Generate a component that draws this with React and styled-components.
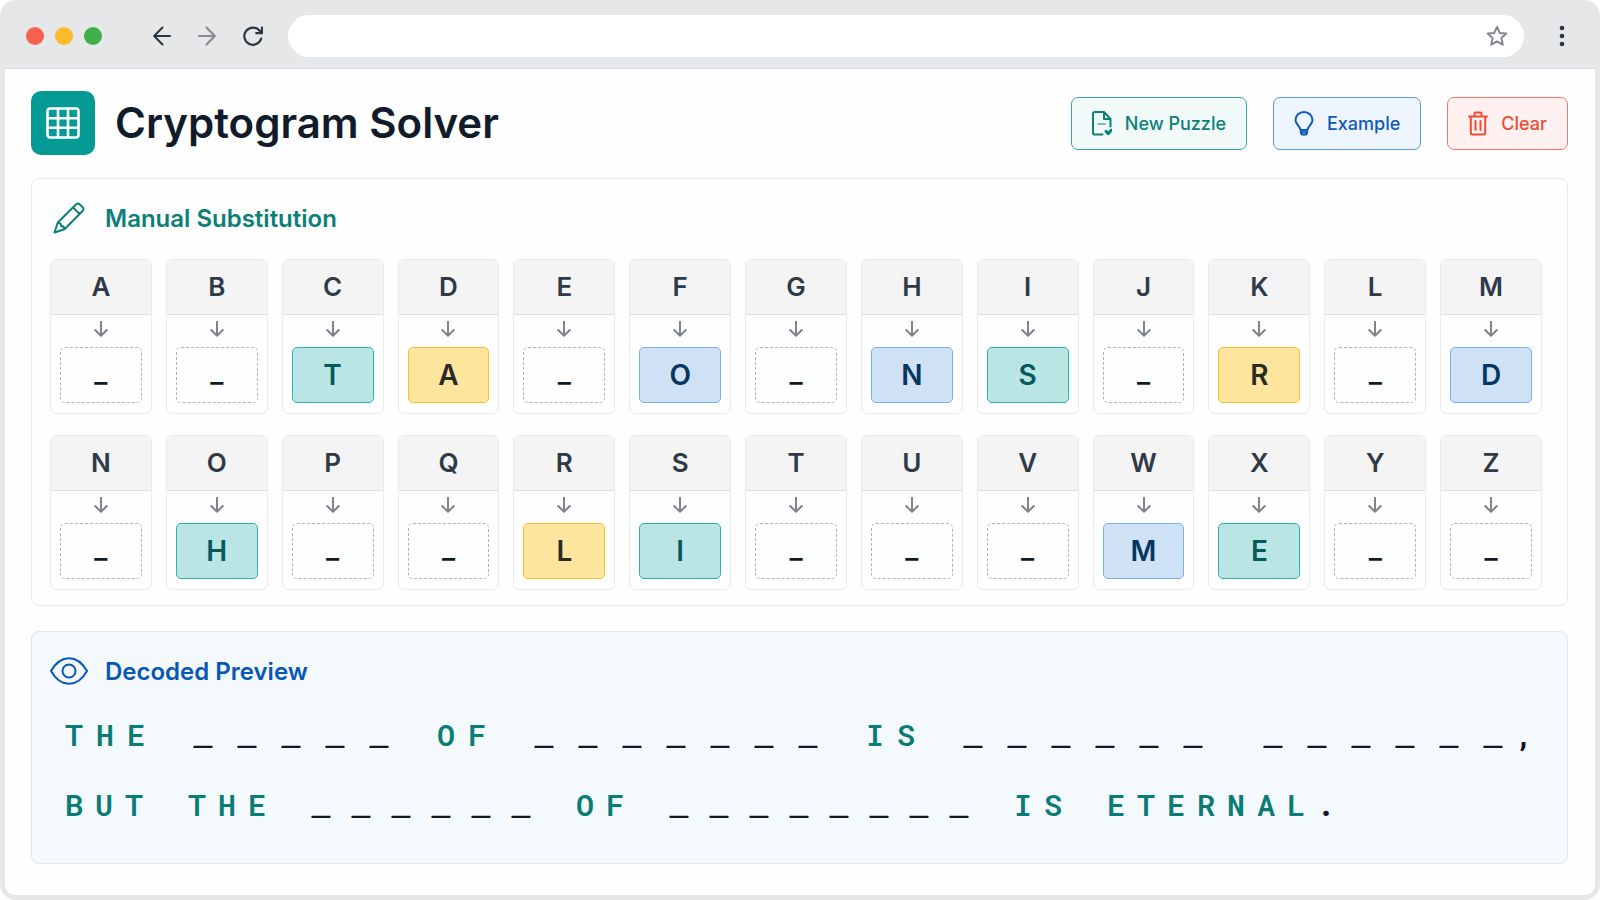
import React from 'react'
import styled, { createGlobalStyle, css } from 'styled-components'

const TOP_ROW = 'ABCDEFGHIJKLM'.split('')
const BOTTOM_ROW = 'NOPQRSTUVWXYZ'.split('')

const SUBSTITUTIONS = {
  C: { letter: 'T', tone: 'teal' },
  D: { letter: 'A', tone: 'amber' },
  F: { letter: 'O', tone: 'blue' },
  H: { letter: 'N', tone: 'blue' },
  I: { letter: 'S', tone: 'teal' },
  K: { letter: 'R', tone: 'amber' },
  M: { letter: 'D', tone: 'blue' },
  O: { letter: 'H', tone: 'teal' },
  R: { letter: 'L', tone: 'amber' },
  S: { letter: 'I', tone: 'teal' },
  W: { letter: 'M', tone: 'blue' },
  X: { letter: 'E', tone: 'teal' }
}

const PREVIEW = [
  { id: 'first', words: ['THE', '_____', 'OF', '_______', 'IS', '______', '______,'] },
  { id: 'second', dense: true, words: ['BUT', 'THE', '______', 'OF', '________', 'IS', 'ETERNAL.'] }
]

const slotTones = {
  teal: { background: '#b9e5e5', border: '#2bb3ad', color: '#065a5c' },
  amber: { background: '#fee59d', border: '#fbc02d', color: '#2a2a24' },
  blue: { background: '#cfe1f5', border: '#7ab0e8', color: '#06365f' }
}

const buttonTones = {
  teal: { background: '#f1faf9', border: '#36a7a0', color: '#0b8078' },
  blue: { background: '#eff5fe', border: '#5a97dc', color: '#0d5bb8' },
  red: { background: '#fff1f0', border: '#f7796a', color: '#f04a35' }
}

const isBlank = word => Boolean(word) && word[0] === '_'

function BrowserBar () {
  return (
    <Chrome>
      <Lights>
        <Light $color='#f9604f' />
        <Light $color='#fdbc2c' />
        <Light $color='#3fb049' />
      </Lights>
      <NavButtons>
        <NavButton aria-label='Back'>
          <svg width='18' height='20' viewBox='0 0 18 20'><path d='M17 10H1.500M9.500 1.500L1.200 10l8.300 8.500' /></svg>
        </NavButton>
        <NavButton aria-label='Forward' $muted>
          <svg width='18' height='20' viewBox='0 0 18 20'><path d='M1 10h15.500M8.500 1.500l8.300 8.500-8.300 8.500' /></svg>
        </NavButton>
        <NavButton aria-label='Reload'>
          <svg width='20' height='20' viewBox='0 0 20 20'><path d='M18.200 12.500a8.600 8.600 0 1 1-1.600-7.800L18.500 7M19 1.500V7.200H13.200' strokeWidth='2.200' /></svg>
        </NavButton>
      </NavButtons>
      <AddressBar>
        <AddressInput aria-label='Address' />
        <NavButton aria-label='Bookmark' $muted>
          <svg width='22' height='22' viewBox='0 0 22 22'><path d='M11 1.800l2.700 6.100 6.600.7-4.900 4.500 1.400 6.600-5.800-3.400-5.800 3.400 1.400-6.600L1.700 8.600l6.600-.7z' /></svg>
        </NavButton>
      </AddressBar>
      <NavButton aria-label='Menu'>
        <MenuDots width='6' height='22' viewBox='0 0 6 22'>
          <circle cx='3' cy='3' r='2.300' />
          <circle cx='3' cy='11' r='2.300' />
          <circle cx='3' cy='19' r='2.300' />
        </MenuDots>
      </NavButton>
    </Chrome>
  )
}

function AppHeader () {
  return (
    <Header>
      <LogoMark>
        <svg width='34' height='32' viewBox='0 0 34 32'>
          <rect x='1.500' y='1.500' width='31' height='29' rx='2.500' strokeWidth='2.600' />
          <path d='M12 2v28M22 2v28M2 11.200h30M2 20.800h30' strokeWidth='2.600' />
        </svg>
      </LogoMark>
      <Title>Cryptogram Solver</Title>
      <Actions>
        <ActionButton $tone='teal'>
          <svg width='20' height='25' viewBox='0 0 20 25'>
            <path d='M10.500 23.500H2.800A1.800 1.800 0 0 1 1 21.700V2.800A1.800 1.800 0 0 1 2.800 1H12l6.500 7v7.500M12 1.500V8h6' />
            <path d='M6 13h7.500' strokeWidth='1' />
            <path d='M14 20.300l2.200 2.400 3-3.500' strokeWidth='3' />
          </svg>
          New Puzzle
        </ActionButton>
        <ActionButton $tone='blue'>
          <svg width='20' height='25' viewBox='0 0 20 25'>
            <path d='M6.500 19c0-3.500-5-5-5-10a8.500 8 0 0 1 17 0c0 5-5 6.500-5 10zM6.800 19v2.200c0 1.600 1 2.600 3.200 2.600s3.200-1 3.200-2.600V19M7 21.300h6' />
          </svg>
          Example
        </ActionButton>
        <ActionButton $tone='red'>
          <svg width='20' height='25' viewBox='0 0 20 25'>
            <path d='M1 5.500h18M6.500 5V2.500a1 1 0 0 1 1-1h5a1 1 0 0 1 1 1V5M2.800 5.500v16.700c0 .8.500 1.300 1.300 1.300h11.800c.8 0 1.300-.5 1.300-1.300V5.500M7.500 10v9M12.500 10v9' />
          </svg>
          Clear
        </ActionButton>
      </Actions>
    </Header>
  )
}

function CipherCell ({ cipher }) {
  const entry = SUBSTITUTIONS[cipher]
  const id = `slot-${cipher}`

  return (
    <Cell>
      <CellLabel htmlFor={id}>{cipher}</CellLabel>
      <Arrow width='14' height='16' viewBox='0 0 14 16'>
        <path d='M7 .5v14M1.200 9L7 14.800 12.800 9' />
      </Arrow>
      <Slot
        id={id}
        maxLength={1}
        placeholder='_'
        defaultValue={entry ? entry.letter : ''}
        $tone={entry && entry.tone}
      />
    </Cell>
  )
}

function SubstitutionPanel () {
  return (
    <Panel>
      <PanelHeading $color='#0b8078'>
        <HeadingIcon>
          <svg width='32' height='32' viewBox='0 0 32 32'>
            <path d='M1.500 30.500l3.300-10L23.200 2.200a2.400 2.400 0 0 1 3.400 0l3.200 3.200a2.400 2.400 0 0 1 0 3.400L11.500 27.200zM4.800 20.500c2.600.2 3.300 1 3.300 3.400 2.400.1 3.300.9 3.400 3.300M20 5.400l6.600 6.600' />
          </svg>
        </HeadingIcon>
        Manual Substitution
      </PanelHeading>
      <CellGrid>
        {[...TOP_ROW, ...BOTTOM_ROW].map(cipher => (
          <CipherCell key={cipher} cipher={cipher} />
        ))}
      </CellGrid>
    </Panel>
  )
}

function PreviewPanel () {
  return (
    <Panel $tinted>
      <PanelHeading $color='#0757b5'>
        <HeadingIcon>
          <svg width='38' height='28' viewBox='0 0 38 28'>
            <path d='M1 14C5.500 6 12 1.200 19 1.200S32.500 6 37 14c-4.500 8-11 12.800-18 12.800S5.500 22 1 14z' />
            <circle cx='19' cy='14' r='6.500' />
          </svg>
        </HeadingIcon>
        Decoded Preview
      </PanelHeading>
      <Lines>
        {PREVIEW.map(({ id, dense, words }) => (
          <Line key={id} $dense={dense}>
            {words.map((word, i) => (
              <Word
                key={i}
                $blank={isBlank(word)}
                $afterBlank={isBlank(word) && isBlank(words[i - 1])}
                $dense={dense}
              >
                {word.split('').map((char, j) => {
                  if (char === '_') return <Blank key={j}>_</Blank>
                  return <Char key={j} $mark={/[.,]/.test(char)}>{char}</Char>
                })}
              </Word>
            ))}
          </Line>
        ))}
      </Lines>
    </Panel>
  )
}

export default function App () {
  return (
    <>
      <GlobalStyle />
      <Window>
        <BrowserBar />
        <Page>
          <AppHeader />
          <SubstitutionPanel />
          <PreviewPanel />
        </Page>
      </Window>
    </>
  )
}

const GlobalStyle = createGlobalStyle`
  * {
    box-sizing: border-box;
  }

  body {
    margin: 0;
    background: #fff;
    font-family: Inter, "Liberation Sans", sans-serif;
  }

  svg {
    flex: none;
    fill: none;
    stroke: currentColor;
    stroke-width: 2;
    stroke-linecap: round;
    stroke-linejoin: round;
  }
`

const Window = styled.div`
  display: flex;
  flex-direction: column;
  min-height: 100vh;
  padding: 0 5px 5px;
  border-radius: 16px;
  background: #e5e7e9;
`

const Chrome = styled.div`
  display: flex;
  align-items: center;
  height: 69px;
  padding: 4px 30px 0 21px;
  border-bottom: 1px solid #d9dce0;
`

const Lights = styled.div`
  display: flex;
  gap: 11px;
`

const Light = styled.span`
  width: 18px;
  height: 18px;
  border-radius: 50%;
  background: ${p => p.$color};
`

const NavButtons = styled.div`
  display: flex;
  gap: 27px;
  margin: 0 25px 0 51px;
`

const NavButton = styled.button`
  display: flex;
  padding: 0;
  border: 0;
  background: none;
  color: ${p => p.$muted ? '#858891' : '#2b3442'};
`

const MenuDots = styled.svg`
  fill: currentColor;
  stroke: none;
`

const AddressBar = styled.div`
  display: flex;
  flex: 1;
  align-items: center;
  height: 42px;
  margin-right: 35px;
  padding: 0 16px 0 20px;
  border-radius: 21px;
  background: #fff;
`

const AddressInput = styled.input`
  flex: 1;
  border: 0;
  outline: 0;
  background: none;
  font: 400 16px Inter, sans-serif;
`

const Page = styled.main`
  flex: 1;
  padding: 22px 27px 31px 26px;
  border-radius: 0 0 10px 10px;
  background: #fefefe;
`

const Header = styled.header`
  display: flex;
  align-items: center;
  margin-bottom: 23px;
`

const LogoMark = styled.div`
  display: flex;
  align-items: center;
  justify-content: center;
  width: 64px;
  height: 64px;
  border-radius: 10px;
  background: #069a95;
  color: #fff;
`

const Title = styled.h1`
  margin: 0 auto 0 20px;
  color: #111c2b;
  font-size: 42px;
  font-weight: 600;
  line-height: 52px;
`

const Actions = styled.div`
  display: flex;
  gap: 26px;
`

const ActionButton = styled.button`
  display: flex;
  align-items: center;
  gap: 13px;
  height: 53px;
  padding: 0 20px;
  border: 1px solid ${p => buttonTones[p.$tone].border};
  border-radius: 7px;
  background: ${p => buttonTones[p.$tone].background};
  color: ${p => buttonTones[p.$tone].color};
  font: 500 18px Inter, sans-serif;
`

const Panel = styled.section`
  padding: 23px 25px 15px 18px;
  border: 1px solid #e6e8ea;
  border-radius: 8px;

  ${p => p.$tinted && css`
    margin-top: 25px;
    padding-bottom: 23px;
    border-color: #dfe6ec;
    background: #f4f9fe;
  `}
`

const PanelHeading = styled.h2`
  display: flex;
  align-items: center;
  gap: 17px;
  height: 32px;
  margin: 0;
  color: ${p => p.$color};
  font-size: 24px;
  font-weight: 600;
`

const HeadingIcon = styled.span`
  display: flex;
  justify-content: center;
  width: 38px;
`

const CellGrid = styled.div`
  display: grid;
  grid-template-columns: repeat(13, 1fr);
  gap: 21px 14px;
  margin-top: 25px;
`

const Cell = styled.div`
  display: flex;
  flex-direction: column;
  align-items: center;
  padding-bottom: 10px;
  border: 1px solid #e8eaec;
  border-radius: 6px;
`

const CellLabel = styled.label`
  align-self: stretch;
  border-bottom: 1px solid #dcdfe2;
  border-radius: 5px 5px 0 0;
  background: #f4f4f5;
  color: #2f3a48;
  font-size: 26px;
  font-weight: 600;
  line-height: 54px;
  text-align: center;
`

const Arrow = styled.svg`
  margin: 6px 0 10px;
  color: #7d828b;
`

const Slot = styled.input`
  width: calc(100% - 18px);
  height: 56px;
  padding: 0;
  border: 1px dashed #b0b3b8;
  border-radius: 5px;
  outline: 0;
  background: none;
  font: 600 28px Inter, sans-serif;
  text-align: center;

  &::placeholder {
    color: #111827;
    opacity: 1;
  }

  &:placeholder-shown {
    padding-bottom: 6px;
  }

  ${p => p.$tone && css`
    border: 1px solid ${slotTones[p.$tone].border};
    background: ${slotTones[p.$tone].background};
    color: ${slotTones[p.$tone].color};
  `}
`

const Lines = styled.div`
  margin-top: 13px;
  padding-left: 15px;
`

const Line = styled.div`
  display: flex;
  align-items: baseline;
  gap: ${p => p.$dense ? 45 : 48}px;
  font-family: "Roboto Mono", "DejaVu Sans Mono", monospace;
`

// two unsolved words in a row need a wider break to read as two
const Word = styled.span`
  display: flex;
  align-items: baseline;
  gap: ${p => p.$blank ? (p.$dense ? 20 : 24) : (p.$dense ? 12 : 13)}px;
  margin-left: ${p => p.$afterBlank ? 12 : 0}px;
`

const Blank = styled.span`
  display: flex;
  justify-content: center;
  width: 20px;
  color: #12161f;
  font-size: 44px;
  font-weight: 300;
  line-height: 44px;
`

const Char = styled.span`
  width: 18px;
  color: ${p => p.$mark ? '#12161f' : '#0a7c76'};
  font-size: 30px;
  font-weight: ${p => p.$mark ? 700 : 600};
  line-height: 70px;
  text-align: center;

  ${Blank} + & {
    margin-left: -12px;
  }
`
